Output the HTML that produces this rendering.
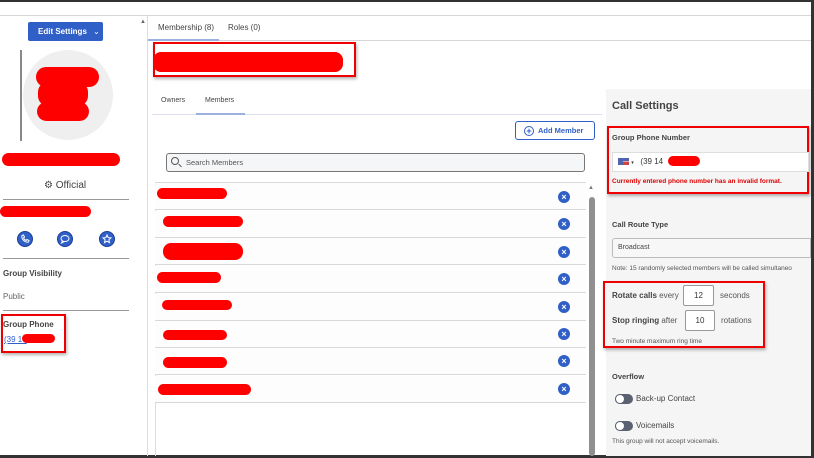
<!DOCTYPE html>
<html><head><style>
*{margin:0;padding:0;box-sizing:border-box}
body{width:814px;height:458px;overflow:hidden;background:#fff;font-family:"Liberation Sans",sans-serif;position:relative;color:#333}
.a{position:absolute}
.r{position:absolute;background:#f00;border-radius:8px}
.rb{position:absolute;border:2px solid #e00;box-shadow:1px 2px 3px rgba(0,0,0,.3)}
.x{position:absolute;width:12px;height:12px;border-radius:50%;background:#2f5fc7;color:#fff;font-size:9px;line-height:12px;text-align:center;font-weight:bold}
.ic{position:absolute;width:16px;height:16px;border-radius:50%;background:#2f5fc7;border:1px solid #1a3f9a}
.ic svg{position:absolute;left:2px;top:2px}
.row{position:absolute;left:155px;width:431px;height:27px;border-bottom:1px solid #d8d8d8;background:#fdfdfd}
.tog{position:absolute;width:18px;height:10px;border-radius:5px;background:#5a6170}
.tog:after{content:"";position:absolute;left:0;top:0;width:10px;height:10px;border-radius:50%;background:#fff;border:1px solid #5a6170;box-sizing:border-box}
</style></head><body>
<div class="a" style="left:0;top:0;width:814px;height:2px;background:#333"></div>
<div class="a" style="right:0;top:0;width:3px;height:458px;background:#333"></div>
<div class="a" style="left:0;bottom:0;width:814px;height:3px;background:#333"></div>
<div class="a" style="left:0;top:15px;width:811px;height:1px;background:#d6d6d6"></div>
<div class="a" style="left:147px;top:16px;width:1px;height:440px;background:#ddd"></div>

<div class="a" style="left:28px;top:22px;width:75px;height:19px;background:#2f5fc7;border-radius:2px;color:#fff;font-size:8px;font-weight:bold;line-height:19px;padding-left:10px">Edit Settings <span style="font-weight:normal;margin-left:4px">&#8964;</span></div>
<div class="a" style="left:140px;top:19px;font-size:6px;color:#666">&#9650;</div>
<div class="a" style="left:20px;top:50px;width:2px;height:91px;background:#888"></div>
<div class="a" style="left:23px;top:50px;width:90px;height:90px;border-radius:50%;background:#efefef"></div>
<div class="r" style="left:36px;top:67px;width:63px;height:20px;border-radius:10px"></div>
<div class="r" style="left:38px;top:82px;width:50px;height:24px;border-radius:10px"></div>
<div class="r" style="left:37px;top:102px;width:52px;height:19px;border-radius:10px"></div>
<div class="r" style="left:2px;top:153px;width:118px;height:13px"></div>
<div class="a" style="left:44px;top:180px;font-size:10px;color:#444">&#9881; Official</div>
<div class="a" style="left:3px;top:199px;width:126px;height:1px;background:#999"></div>
<div class="r" style="left:0;top:206px;width:91px;height:11px"></div>
<div class="ic" style="left:17px;top:231px"><svg width="10" height="10" viewBox="0 0 10 10" fill="none" stroke="#fff" stroke-width="1"><path d="M2 1.5l1.5-.5 1 2-1 1c.5 1 1.5 2 2.5 2.5l1-1 2 1-.5 1.5C5 9 1 5 2 1.5z"/></svg></div>
<div class="ic" style="left:57px;top:231px"><svg width="10" height="10" viewBox="0 0 10 10" fill="none" stroke="#fff" stroke-width="1"><ellipse cx="5" cy="4.5" rx="4" ry="3"/><path d="M2.5 7l-1 2 2.5-1.3"/></svg></div>
<div class="ic" style="left:99px;top:231px"><svg width="10" height="10" viewBox="0 0 10 10" fill="none" stroke="#fff" stroke-width="1"><path d="M5 1l1.2 2.6 2.8.3-2.1 1.9.6 2.8L5 7.2 2.5 8.6l.6-2.8L1 3.9l2.8-.3z"/></svg></div>
<div class="a" style="left:3px;top:258px;width:126px;height:1px;background:#999"></div>
<div class="a" style="left:3px;top:269px;font-size:8px;font-weight:bold;color:#444">Group Visibility</div>
<div class="a" style="left:3px;top:292px;font-size:8px;color:#666">Public</div>
<div class="a" style="left:3px;top:310px;width:126px;height:1px;background:#999"></div>
<div class="rb" style="left:1px;top:314px;width:65px;height:39px"></div>
<div class="a" style="left:3px;top:320px;font-size:8px;font-weight:bold;color:#444">Group Phone</div>
<div class="a" style="left:4px;top:335px;font-size:8px;color:#2f5fc7;text-decoration:underline">(39 14</div>
<div class="r" style="left:22px;top:334px;width:33px;height:9px"></div>

<div class="a" style="left:158px;top:23px;font-size:8px;color:#444">Membership (8)</div>
<div class="a" style="left:228px;top:23px;font-size:8px;color:#444">Roles (0)</div>
<div class="a" style="left:148px;top:40px;width:663px;height:1px;background:#d6d6d6"></div>
<div class="a" style="left:148px;top:39px;width:71px;height:2px;background:#9bb0de"></div>
<div class="rb" style="left:153px;top:42px;width:203px;height:35px"></div>
<div class="r" style="left:153px;top:52px;width:190px;height:20px"></div>
<div class="a" style="left:161px;top:97px;font-size:7px;color:#444">Owners</div>
<div class="a" style="left:205px;top:97px;font-size:7px;color:#444">Members</div>
<div class="a" style="left:152px;top:114px;width:450px;height:1px;background:#dde"></div>
<div class="a" style="left:196px;top:113px;width:49px;height:2px;background:#9bb0de"></div>
<div class="a" style="left:515px;top:121px;width:80px;height:19px;border:1px solid #2f5fc7;border-radius:3px;font-size:7.5px;font-weight:bold;color:#2f5fc7;line-height:17px;padding-left:8px"><span style="display:inline-block;width:10px;height:10px;border:1px solid #2f5fc7;border-radius:50%;text-align:center;line-height:8px;font-size:9px;margin-right:4px;vertical-align:middle">+</span>Add Member</div>
<div class="a" style="left:166px;top:153px;width:419px;height:19px;border:1px solid #777;border-radius:3px;background:#f5f6f8;font-size:7.5px;color:#555;line-height:17px;padding-left:19px">Search Members</div>
<div class="a" style="left:171px;top:157px;width:8px;height:8px;border:1.3px solid #555;border-radius:50%"></div>
<div class="a" style="left:178px;top:165px;width:4px;height:1.3px;background:#555;transform:rotate(45deg)"></div>
<div class="a" style="left:155px;top:182px;width:1px;height:274px;background:#ddd"></div>
<div class="a" style="left:155px;top:182px;width:431px;height:1px;background:#d8d8d8"></div>
<div class="row" style="top:183px"></div><div class="row" style="top:211px"></div><div class="row" style="top:238px"></div><div class="row" style="top:266px"></div>
<div class="row" style="top:294px"></div><div class="row" style="top:321px"></div><div class="row" style="top:348px"></div><div class="row" style="top:376px"></div>
<div class="r" style="left:157px;top:188px;width:70px;height:11px"></div>
<div class="r" style="left:163px;top:216px;width:80px;height:11px"></div>
<div class="r" style="left:163px;top:243px;width:80px;height:17px"></div>
<div class="r" style="left:157px;top:272px;width:64px;height:11px"></div>
<div class="r" style="left:162px;top:300px;width:70px;height:10px"></div>
<div class="r" style="left:163px;top:330px;width:64px;height:10px"></div>
<div class="r" style="left:163px;top:357px;width:64px;height:11px"></div>
<div class="r" style="left:158px;top:384px;width:93px;height:11px"></div>
<div class="x" style="left:558px;top:191px">×</div><div class="x" style="left:558px;top:218px">×</div><div class="x" style="left:558px;top:246px">×</div><div class="x" style="left:558px;top:273px">×</div>
<div class="x" style="left:558px;top:301px">×</div><div class="x" style="left:558px;top:328px">×</div><div class="x" style="left:558px;top:355px">×</div><div class="x" style="left:558px;top:383px">×</div>
<div class="a" style="left:588px;top:185px;font-size:6px;color:#777">&#9650;</div>
<div class="a" style="left:589px;top:197px;width:6px;height:259px;background:#909090;border-radius:3px"></div>

<div class="a" style="left:606px;top:89px;width:205px;height:367px;background:#f5f5f5"></div>
<div class="a" style="left:612px;top:100px;font-size:11px;font-weight:bold;color:#444">Call Settings</div>
<div class="rb" style="left:607px;top:126px;width:202px;height:68px"></div>
<div class="a" style="left:612px;top:133px;font-size:7.5px;font-weight:bold;color:#444">Group Phone Number</div>
<div class="a" style="left:612px;top:152px;width:197px;height:20px;background:#fff;border:1px solid #ddd;font-size:8px;line-height:18px;padding-left:5px;color:#333"><span style="display:inline-block;width:11px;height:7px;background:linear-gradient(#c44 0 30%,#fff 30% 50%,#c44 50%);vertical-align:middle;box-shadow:inset 5px 3px 0 #5064b0"></span> <span style="font-size:5px">▾</span>&nbsp;&nbsp; (39 14</div>
<div class="r" style="left:668px;top:156px;width:32px;height:10px"></div>
<div class="a" style="left:612px;top:178px;font-size:6.5px;font-weight:bold;color:#d00">Currently entered phone number has an invalid format.</div>
<div class="a" style="left:612px;top:220px;font-size:7.5px;font-weight:bold;color:#444">Call Route Type</div>
<div class="a" style="left:612px;top:238px;width:199px;height:20px;background:#f7f7f7;border:1px solid #bbb;border-radius:3px 0 0 3px;font-size:7px;line-height:18px;padding-left:5px;color:#444">Broadcast</div>
<div class="a" style="left:612px;top:265px;font-size:6.5px;color:#555;white-space:nowrap">Note: 15 randomly selected members will be called simultaneo</div>
<div class="rb" style="left:603px;top:281px;width:162px;height:67px"></div>
<div class="a" style="left:612px;top:291px;font-size:8px;color:#555"><b style="color:#444">Rotate calls</b> every</div>
<div class="a" style="left:683px;top:285px;width:31px;height:21px;background:#fff;border:1px solid #999;border-radius:2px;font-size:8px;text-align:center;line-height:19px">12</div>
<div class="a" style="left:720px;top:291px;font-size:8px;color:#555">seconds</div>
<div class="a" style="left:612px;top:316px;font-size:8px;color:#555"><b style="color:#444">Stop ringing</b> after</div>
<div class="a" style="left:685px;top:310px;width:30px;height:21px;background:#fff;border:1px solid #999;border-radius:2px;font-size:8px;text-align:center;line-height:19px">10</div>
<div class="a" style="left:721px;top:316px;font-size:8px;color:#555">rotations</div>
<div class="a" style="left:612px;top:338px;font-size:6.5px;color:#555">Two minute maximum ring time</div>
<div class="a" style="left:612px;top:372px;font-size:7.5px;font-weight:bold;color:#444">Overflow</div>
<div class="tog" style="left:615px;top:394px"></div>
<div class="a" style="left:636px;top:394px;font-size:8px;color:#444">Back-up Contact</div>
<div class="tog" style="left:615px;top:421px"></div>
<div class="a" style="left:636px;top:421px;font-size:8px;color:#444">Voicemails</div>
<div class="a" style="left:612px;top:438px;font-size:6.5px;color:#555">This group will not accept voicemails.</div>
</body></html>
